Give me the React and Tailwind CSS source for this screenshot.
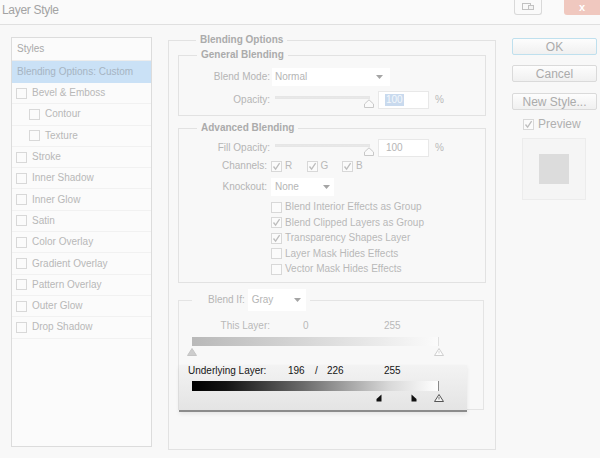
import React from "react";

const Check = ({ checked }) => (
  <span className="w-[11px] h-[11px] shrink-0 border border-[#d8d8d8] bg-[#fbfbfb] flex items-center justify-center">
    {checked && (
      <svg width="9" height="9" viewBox="0 0 9 9">
        <path d="M1.5 4.5 L3.6 7.2 L7.6 1.2" stroke="#bdbdbd" strokeWidth="1.3" fill="none" />
      </svg>
    )}
  </span>
);

const Arrow = () => (
  <svg width="7" height="4" viewBox="0 0 7 4">
    <path d="M0 0 L7 0 L3.5 4 Z" fill="#a5a5a5" />
  </svg>
);

const Thumb = () => (
  <svg width="10" height="9" viewBox="0 0 10 9">
    <path d="M0.5 8.5 L0.5 5 L5 0.8 L9.5 5 L9.5 8.5 Z" fill="#fafafa" stroke="#c8c8c8" />
  </svg>
);

const StyleRow = ({ label, sub }) => (
  <div
    className={`h-[21.3px] flex items-center border-b border-[#f1f1f1] ${
      sub ? "pl-[17px]" : "pl-[4px]"
    }`}
  >
    <Check />
    <span className="ml-[5px] text-[#b8b8b8]">{label}</span>
  </div>
);

const SliderRow = ({ label, value, selected }) => (
  <div className="flex items-center h-[18px]">
    <span className="w-[91px] text-right text-[#b5b5b5]">{label}</span>
    <div className="relative w-[104px] ml-[2px] h-[18px]">
      <div className="absolute left-[3px] top-[5px] w-[95px] h-[3px] bg-gradient-to-b from-[#dedede] to-[#f3f3f3] border border-[#e6e6e6]" />
      <div className="absolute left-[92px] top-[8px]">
        <Thumb />
      </div>
    </div>
    <div className="ml-[2px] w-[51px] h-[18px] bg-white border border-[#e8e8e8] flex items-center pl-[6px]">
      {selected ? (
        <span className="bg-[#c9daee] text-[#f4f8fc] px-[1px]">{value}</span>
      ) : (
        <span className="text-[#b5b5b5] pl-[1px]">{value}</span>
      )}
    </div>
    <span className="ml-[6px] text-[#b8b8b8]">%</span>
  </div>
);

const Legend = ({ children }) => (
  <legend className="ml-[18px] px-[4px] text-[10px] leading-[12px] font-bold text-[#ababab]">
    {children}
  </legend>
);

const Btn = ({ children, ok, className }) => (
  <div
    className={`w-[85px] h-[17px] rounded-[2px] flex items-center justify-center text-[12px] text-[#ababab] bg-gradient-to-b from-[#fdfdfd] to-[#f0f0f0] border ${
      ok ? "border-[#bfe0ee]" : "border-[#dadada]"
    } ${className}`}
  >
    {children}
  </div>
);

export default function App() {
  const styles = [
    ["Bevel & Emboss"],
    ["Contour", true],
    ["Texture", true],
    ["Stroke"],
    ["Inner Shadow"],
    ["Inner Glow"],
    ["Satin"],
    ["Color Overlay"],
    ["Gradient Overlay"],
    ["Pattern Overlay"],
    ["Outer Glow"],
    ["Drop Shadow"],
  ];

  const knock = [
    ["Blend Interior Effects as Group", false],
    ["Blend Clipped Layers as Group", true],
    ["Transparency Shapes Layer", true],
    ["Layer Mask Hides Effects", false],
    ["Vector Mask Hides Effects", false],
  ];

  return (
    <div className="w-[600px] h-[458px] overflow-hidden bg-[#f8f8f8] flex flex-col text-[10px] leading-[12px] font-['Liberation_Sans',Arial,sans-serif]">
      {/* title bar */}
      <div className="h-[25px] shrink-0 flex justify-between bg-[#fafafa] border-b border-[#e0e0e0]">
        <span className="pl-[2px] pt-[3px] text-[12px] leading-[14px] tracking-[-0.3px] text-[#a3a3a3]">
          Layer Style
        </span>
        <div className="flex items-start">
          <div className="w-[28px] h-[15px] border border-t-0 border-[#d9d9d9] rounded-b-[3px] bg-[#fafafa] flex items-center justify-center">
            <svg width="12" height="8" viewBox="0 0 12 8">
              <rect x="0.5" y="0.5" width="8" height="6" fill="none" stroke="#c2c2c2" />
              <rect x="6.5" y="2.5" width="5" height="4" fill="#f3f3f3" stroke="#c2c2c2" />
            </svg>
          </div>
          <div className="ml-[22px] w-[36px] h-[15px] rounded-bl-[3px] bg-[#f0c8bf] flex items-center justify-center text-white text-[11px] leading-[11px] font-bold">
            x
          </div>
        </div>
      </div>

      <div className="flex pt-[9px]">
        {/* styles list */}
        <div className="mt-[3px] ml-[11px] w-[141px] h-[410px] border border-[#dcdcdc] bg-[#fbfbfb]">
          <div className="h-[23px] flex items-center pl-[5px] text-[#a9a9a9] border-b border-[#ececec]">
            Styles
          </div>
          <div className="h-[22px] flex items-center pl-[5px] bg-[#cae1f6] text-[#a6b4c2]">
            Blending Options: Custom
          </div>
          {styles.map(([l, s]) => (
            <StyleRow key={l} label={l} sub={s} />
          ))}
        </div>

        {/* blending options */}
        <fieldset className="ml-[16px] w-[328px] h-[416px] border border-[#e2e2e2] px-[9px]">
          <Legend>Blending Options</Legend>

          <fieldset className="mt-[3px] border border-[#e2e2e2]">
            <Legend>General Blending</Legend>
            <div className="flex items-center h-[18px] mt-[7px]">
              <span className="w-[91px] text-right text-[#b5b5b5]">Blend Mode:</span>
              <div className="ml-[2px] w-[118px] h-[18px] bg-white flex items-center justify-between pl-[3px] pr-[7px]">
                <span className="text-[#b5b5b5]">Normal</span>
                <Arrow />
              </div>
            </div>
            <div className="mt-[5px] mb-[6px]">
              <SliderRow label="Opacity:" value="100" selected />
            </div>
          </fieldset>

          <fieldset className="mt-[6px] border border-[#e2e2e2] pb-[5px]">
            <Legend>Advanced Blending</Legend>
            <div className="mt-[5px]">
              <SliderRow label="Fill Opacity:" value="100" />
            </div>
            <div className="mt-[2px] h-[14px] flex items-center">
              <span className="w-[88px] text-right text-[#b5b5b5]">Channels:</span>
              <div className="ml-[4px] flex">
                {["R", "G", "B"].map((c) => (
                  <div key={c} className="w-[35.5px] flex items-center">
                    <Check checked />
                    <span className="ml-[3px] text-[#b8b8b8]">{c}</span>
                  </div>
                ))}
              </div>
            </div>
            <div className="mt-[5px] h-[18px] flex items-center">
              <span className="w-[88px] text-right text-[#b5b5b5]">Knockout:</span>
              <div className="ml-[4px] w-[63px] h-[18px] bg-white flex items-center justify-between pl-[4px] pr-[4px]">
                <span className="text-[#b5b5b5]">None</span>
                <Arrow />
              </div>
            </div>
            <div className="mt-[3.5px]">
              {knock.map(([l, c]) => (
                <div key={l} className="h-[15.5px] flex items-center pl-[92px]">
                  <Check checked={c} />
                  <span className="ml-[3px] text-[#b8b8b8]">{l}</span>
                </div>
              ))}
            </div>
          </fieldset>

          <fieldset className="mt-[6px] w-[306px] border border-[#e4e4e4]">
            <legend className="ml-[13px] pl-[16px] pr-[4px]">
              <div className="flex items-center h-[22px]">
                <span className="text-[#b5b5b5]">Blend If:</span>
                <div className="ml-[3px] w-[58px] h-[22px] bg-white flex items-center justify-between pl-[4px] pr-[5px]">
                  <span className="text-[#b5b5b5]">Gray</span>
                  <Arrow />
                </div>
              </div>
            </legend>

            <div className="mt-[9px] h-[12px] flex text-[#b8b8b8]">
              <span className="w-[91px] text-right">This Layer:</span>
              <span className="w-[33px]" />
              <span className="w-[81px]">0</span>
              <span>255</span>
            </div>
            <div className="mt-[5px] ml-[13px] w-[247px] h-[9px] bg-gradient-to-r from-[#b9b9b9] to-[#fbfbfb] border-r border-[#e0e0e0]" />
            <div className="relative ml-[13px] w-[247px] h-[9px] mt-[2px]">
              <svg className="absolute left-[-5px] top-0" width="10" height="8" viewBox="0 0 10 8">
                <path d="M5 0.5 L9.5 7.5 L0.5 7.5 Z" fill="#cdcdcd" stroke="#c4c4c4" />
              </svg>
              <svg className="absolute left-[242px] top-0" width="10" height="8" viewBox="0 0 10 8">
                <path d="M5 0.5 L9.5 7.5 L0.5 7.5 Z" fill="#fdfdfd" stroke="#cfcfcf" />
                <path d="M5 3 L5 5.5" stroke="#d6d6d6" />
              </svg>
            </div>

            {/* underlying layer */}
            <div className="mt-[8px] mb-[-3px] w-[288px] h-[47px] bg-gradient-to-b from-[#f3f3f3] to-[#e4e4e4] border-b-2 border-[#8c8c8c] shadow-[0_2px_4px_rgba(0,0,0,0.08)]">
              <div className="h-[12px] pl-[9px] flex text-[#151515]">
                <span className="w-[100px]">Underlying Layer:</span>
                <span className="w-[27px]">196</span>
                <span className="w-[12px]">/</span>
                <span className="w-[57px]">226</span>
                <span>255</span>
              </div>
              <div className="mt-[4px] ml-[13px] w-[247px] h-[10px] bg-[linear-gradient(to_right,#000_0%,#141414_14%,#6a6a6a_45%,#d8d8d8_80%,#ffffff_100%)] border-r border-[#8a8a8a]" />
              <div className="relative ml-[13px] w-[247px] h-[9px] mt-[3px]">
                <svg className="absolute left-[184px] top-0" width="6" height="8" viewBox="0 0 6 8">
                  <path d="M5.5 0.5 L5.5 7.5 L0.5 7.5 L0.5 5 Z" fill="#111" />
                </svg>
                <svg className="absolute left-[219px] top-0" width="6" height="8" viewBox="0 0 6 8">
                  <path d="M0.5 0.5 L0.5 7.5 L5.5 7.5 L5.5 5 Z" fill="#111" />
                </svg>
                <svg className="absolute left-[242px] top-0" width="10" height="8" viewBox="0 0 10 8">
                  <path d="M5 0.5 L9.5 7.5 L0.5 7.5 Z" fill="#f4f4f4" stroke="#555" />
                  <path d="M5 3 L5 5.5" stroke="#777" />
                </svg>
              </div>
            </div>
          </fieldset>
        </fieldset>

        {/* buttons */}
        <div className="ml-[16px] pt-[4px] flex flex-col">
          <Btn ok>OK</Btn>
          <Btn className="mt-[10px]">Cancel</Btn>
          <Btn className="mt-[11px]">New Style...</Btn>
          <div className="mt-[8px] h-[12px] flex items-center pl-[11px]">
            <Check checked />
            <span className="ml-[4px] text-[12px] text-[#b0b0b0]">Preview</span>
          </div>
          <div className="mt-[8px] ml-[10px] w-[64px] h-[62px] border border-[#ececec] bg-[#f5f5f5] flex items-center justify-center">
            <div className="w-[30px] h-[30px] bg-[#dcdcdc]" />
          </div>
        </div>
      </div>
    </div>
  );
}
